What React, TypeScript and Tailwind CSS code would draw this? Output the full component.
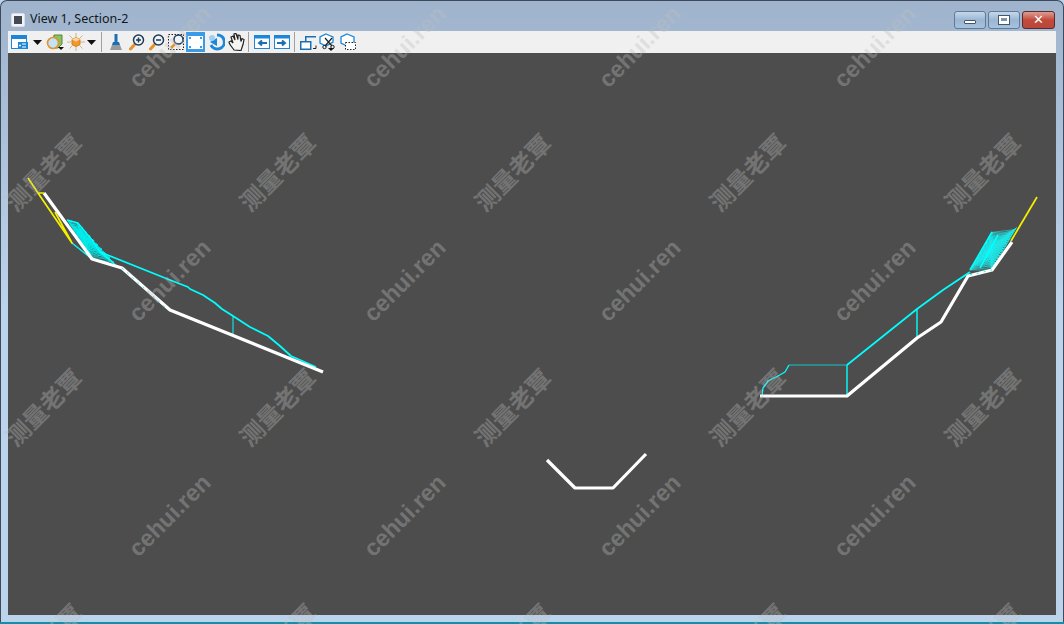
import type { ReactNode } from "react";

const latinMarks = [47, 281, 516].flatMap((y) =>
  [170, 405, 640, 875].map((x) => ({ x, y })),
);
const cjkMarks = [172, 407, 642].flatMap((y) =>
  [43, 277, 512, 747, 982].map((x) => ({ x, y })),
);

// hatch of the cut/fill areas, lines between two edges
function hatch(
  a: [number, number],
  b: [number, number],
  c: [number, number],
  d: [number, number],
  n: number,
) {
  const out: string[] = [];
  for (let i = 0; i <= n; i++) {
    const t = i / n;
    const u = ((i * 7) % n) / n;
    const x1 = a[0] + (b[0] - a[0]) * t;
    const y1 = a[1] + (b[1] - a[1]) * t;
    const x2 = c[0] + (d[0] - c[0]) * u;
    const y2 = c[1] + (d[1] - c[1]) * u;
    out.push(`M${x1.toFixed(1)} ${y1.toFixed(1)}L${x2.toFixed(1)} ${y2.toFixed(1)}`);
  }
  return out.join("");
}

function Ico({ children, w = 18 }: { children: ReactNode; w?: number }) {
  return (
    <svg width={w} height={18} viewBox={`0 0 ${w} 18`} className="block shrink-0">
      {children}
    </svg>
  );
}

function Caret() {
  return (
    <svg width={9} height={5} viewBox="0 0 9 5" className="block shrink-0">
      <path d="M0 0h9L4.500 5z" fill="#111" />
    </svg>
  );
}

function Magnifier({ sign }: { sign?: "+" | "-" }) {
  return (
    <Ico>
      <path d="M7 11 2.500 16" stroke="#e8912a" strokeWidth="3" strokeLinecap="round" />
      <circle cx="10.500" cy="7" r="5" fill="#eef6fb" stroke="#1f3a55" strokeWidth="1.500" />
      {sign && <path d="M8 7h5" stroke="#1f3a55" strokeWidth="1.500" />}
      {sign === "+" && <path d="M10.500 4.500v5" stroke="#1f3a55" strokeWidth="1.500" />}
    </Ico>
  );
}

function Sep() {
  return <div className="h-5 w-px shrink-0 bg-[#a0a0a0]" />;
}

function Toolbar() {
  return (
    <div className="flex h-[22px] items-center bg-[#f0f0f0] pl-[3px]">
      <div className="w-[22px]">
        <Ico>
          <rect x="0.500" y="2.500" width="15" height="13" fill="#fff" stroke="#1b87d8" />
          <rect x="0.500" y="2.500" width="15" height="3.500" fill="#1b87d8" />
          <rect x="7" y="9" width="10" height="7" fill="#1b87d8" />
          <path d="M11 11h4M11 14h4" stroke="#fff" />
          <circle cx="9" cy="12.500" r="1" fill="#fff" />
        </Ico>
      </div>
      <div className="mr-[4px]">
        <Caret />
      </div>
      <div className="relative w-[21px]">
        <Ico>
          <path d="M8 2h8v9l-4 4H6z" fill="#8cc063" stroke="#4f8a34" />
          <circle cx="7" cy="10" r="5.500" fill="#bfe3f7" stroke="#e8912a" strokeWidth="1.600" />
        </Ico>
        <div className="absolute top-[14px] left-[12px] h-0 w-0 border-x-[3px] border-t-[3px] border-x-transparent border-t-[#111]" />
      </div>
      <div className="w-[20px]">
        <Ico>
          <path
            d="M9 0v4M9 14v4M0 9h4M14 9h4M2.500 2.500l3 3M12.500 12.500l3 3M15.500 2.500l-3 3M5.500 12.500l-3 3"
            stroke="#c9b48c"
          />
          <path d="M9 4.500l4 2v5l-4 2-4-2v-5z" fill="#f09a2e" stroke="#d87a15" />
          <path d="M9 4.500l4 2-4 2-4-2z" fill="#fbd9a0" />
        </Ico>
      </div>
      <div className="mr-[5px]">
        <Caret />
      </div>
      <Sep />
      <div className="ml-[7px] w-[19px]">
        <Ico w={14}>
          <rect x="5.500" y="1" width="3" height="8" fill="#1b6fb5" />
          <path d="M4 9h6l1 3H3z" fill="#1b6fb5" />
          <path d="M3 12h8l2 5H1z" fill="#9a9a9a" />
        </Ico>
      </div>
      <div className="w-[20px]">
        <Magnifier sign="+" />
      </div>
      <div className="w-[20px]">
        <Magnifier sign="-" />
      </div>
      <div className="w-[18px]">
        <Ico w={17}>
          <rect x="0.500" y="1.500" width="15" height="15" fill="none" stroke="#222" strokeDasharray="1.500 1.500" />
          <path d="M7 11 3 15" stroke="#e8912a" strokeWidth="2.500" />
          <circle cx="10.500" cy="6.500" r="4.500" fill="#eef6fb" stroke="#1f3a55" strokeWidth="1.500" />
        </Ico>
      </div>
      <div className="flex h-[20px] w-[19px] items-center justify-center bg-[#3a9be6]">
        <svg width={15} height={13} viewBox="0 0 15 13" className="block">
          <rect width="15" height="13" fill="#fff" />
          <path d="M1 1h2v2H1zM12 1h2v2h-2zM1 10h2v2H1zM12 10h2v2h-2z" fill="#3a9be6" />
        </svg>
      </div>
      <div className="ml-[3px] w-[20px]">
        <Ico w={17}>
          <path d="M9 2a7 7 0 1 1-6 10" fill="none" stroke="#1b87d8" strokeWidth="3" />
          <path d="M9 5 2 9l7 4z" fill="#1b87d8" />
          <circle cx="4" cy="5" r="3" fill="#9dd0f2" />
        </Ico>
      </div>
      <div className="w-[20px]">
        <Ico w={17}>
          <path
            d="M6 17C4 14 1 11 1 9l2-1 2 2-2-6 2-1 2 4-1-6 2-.5 2 6V2l2 .5 1 6 1-3 2 1-1 5-2 6z"
            fill="#f4f4f4"
            stroke="#222"
            strokeWidth="1.200"
          />
        </Ico>
      </div>
      <Sep />
      <div className="ml-[5px] w-[20px]">
        <Ico w={17}>
          <rect x="0.500" y="2.500" width="15" height="13" fill="#fff" stroke="#1b87d8" />
          <rect x="0.500" y="2.500" width="15" height="3" fill="#1b87d8" />
          <path d="M13 10H5M8 7.500 5 10l3 2.500" fill="none" stroke="#1b6fb5" strokeWidth="2" />
        </Ico>
      </div>
      <div className="w-[20px]">
        <Ico w={17}>
          <rect x="0.500" y="2.500" width="15" height="13" fill="#fff" stroke="#1b87d8" />
          <rect x="0.500" y="2.500" width="15" height="3" fill="#1b87d8" />
          <path d="M3 10h8M8 7.500l3 2.500-3 2.500" fill="none" stroke="#1b6fb5" strokeWidth="2" />
        </Ico>
      </div>
      <Sep />
      <div className="ml-[5px] w-[19px]">
        <Ico>
          <rect x="0.750" y="8.750" width="10" height="7.500" fill="#fff" stroke="#1b6fb5" strokeWidth="1.500" />
          <path d="M5.750 8V3.750H16" fill="none" stroke="#1b6fb5" strokeWidth="1.500" />
          <path d="M13 15.500h3v-3" fill="none" stroke="#222" />
        </Ico>
      </div>
      <div className="relative w-[21px]">
        <Ico>
          <path d="M7 1l7 3v5l-7 4-6-3V4z" fill="#fff" stroke="#1b87d8" strokeWidth="1.300" />
          <path d="M6 5l7 8M13 5l-7 8" stroke="#222" strokeWidth="1.200" />
          <circle cx="5.500" cy="14" r="1.700" fill="none" stroke="#222" />
          <circle cx="13.500" cy="14" r="1.700" fill="none" stroke="#222" />
        </Ico>
        <div className="absolute top-[15px] left-[9px] h-0 w-0 border-x-[3px] border-t-[3px] border-x-transparent border-t-[#111]" />
      </div>
      <div>
        <Ico>
          <path d="M7 1l7 3v5l-7 4-6-3V4z" fill="#fff" stroke="#1b87d8" strokeWidth="1.300" />
          <rect x="5.500" y="9.500" width="10" height="7" fill="#fff" stroke="#222" strokeDasharray="1.500 1.500" />
        </Ico>
      </div>
    </div>
  );
}

function WinButton({ children, close }: { children: ReactNode; close?: boolean }) {
  return (
    <div
      className={
        close
          ? "flex h-[18px] w-[33px] items-center justify-center rounded-[3px] border border-[#5a2a30] bg-gradient-to-b from-[#dc9d94] via-[#c2493a] to-[#b8483c]"
          : "flex h-[18px] w-[32px] items-center justify-center rounded-[3px] border border-[#5d7a9c] bg-gradient-to-b from-[#c6d8ea] via-[#9ab6d3] to-[#a7c2dc]"
      }
    >
      {children}
    </div>
  );
}

function Drawing() {
  const hatchLeft = hatch([67, 220], [92, 259], [78, 223], [118, 267], 70);
  const hatchRight = hatch([970, 270], [992, 232], [992, 270], [1017, 227], 120);
  return (
    <svg viewBox="8 53 1048 562" className="block h-full w-full">
      <g fill="none" strokeLinejoin="round">
        <path d={hatchLeft} stroke="#00f0f0" strokeWidth="0.700" opacity="0.9" />
        <path d="M67 220 78 223 92 240 100 252 118 267M72 243 92 259" stroke="#00ffff" strokeWidth="1.300" />
        <path
          d="M100 252 170 280 188 287 190 289 203 295 215 303 222 309 233 316 250 327 268 336 280 346 291 356 316 367"
          stroke="#00ffff"
          strokeWidth="1.700"
        />
        <path d="M233 316V336" stroke="#00ffff" />

        <path d={hatchRight} stroke="#20eeee" strokeWidth="0.600" opacity="0.85" />
        <path d="M970 270 992 232M980 268 998 235M970 272 943 290 917 309 847 365" stroke="#00ffff" strokeWidth="1.700" />
        <path d="M847 365V396M917 309V338" stroke="#00ffff" strokeWidth="1.400" />
        <path d="M847 365H789" stroke="#00e8e8" strokeWidth="0.800" />
        <path d="M789 365 785 372 778 376 768 381 763 388 762 396" stroke="#00ffff" strokeWidth="1.300" />

        <path d="M44 193 92 259 122 268 170 310 323 372" stroke="#fff" strokeWidth="3.200" />
        <path d="M760 396H847L917 338 941 322 968 276 992 270 1012 242" stroke="#fff" strokeWidth="3.200" />
        <path d="M547 460 575 488H613L646 454" stroke="#fff" strokeWidth="3.200" />
        <path d="M122 268 167 309M970 275 992 270" stroke="#00e8e8" strokeWidth="0.800" strokeDasharray="2 5" />

        <path d="M28 178 38 193H44M38 193 72 243 55 212" stroke="#f4f000" strokeWidth="1.700" />
        <path d="M1011 241 1037 197" stroke="#f4f000" strokeWidth="1.700" />
      </g>
    </svg>
  );
}

export default function App() {
  return (
    <div className="relative flex h-[624px] w-[1064px] flex-col overflow-hidden bg-[#bcd3ec] font-['Noto_Sans','Liberation_Sans',sans-serif]">
      <div className="flex flex-1 flex-col overflow-hidden rounded-t-[7px] border-x border-t border-[#3c4a5c] bg-gradient-to-b from-[#9fb4cc] via-[#bcd3ec] to-[#bcd3ec] px-[7px] pb-[7px]">
        <div className="flex h-[30px] items-center justify-between pt-[7px] pr-[1px]">
          <div className="flex items-center pl-[3px]">
            <div className="flex h-[14px] w-[14px] items-center justify-center rounded-[2px] border border-[#d8dee6] bg-[#f0f3f7]">
              <div className="h-[8px] w-[8px] bg-[#454a52]" />
            </div>
            <span className="ml-[5px] text-[12.5px] leading-none text-[#101820]">View 1, Section-2</span>
          </div>
          <div className="flex gap-[2px]">
            <WinButton>
              <div className="mt-[5px] h-[4px] w-[12px] rounded-[1px] border border-[#44566b] bg-white" />
            </WinButton>
            <WinButton>
              <div className="flex h-[10px] w-[12px] items-center justify-center border border-[#44566b] bg-white">
                <div className="h-[3px] w-[6px] bg-[#7f94ac]" />
              </div>
            </WinButton>
            <WinButton close>
              <span className="text-[13px] leading-none font-bold text-white [font-family:'DejaVu_Sans',sans-serif]">✕</span>
            </WinButton>
          </div>
        </div>
        <Toolbar />
        <div className="min-h-0 flex-1 bg-[#4d4d4d]">
          <Drawing />
        </div>
      </div>
      <div className="h-[2px] bg-[#0f8fa8]" />

      {latinMarks.map((m) => (
        <span
          key={`${m.x}-${m.y}`}
          className="pointer-events-none absolute -translate-x-1/2 -translate-y-1/2 -rotate-45 text-[23.5px] leading-none font-bold whitespace-nowrap text-[rgba(190,190,190,0.36)] [font-family:'Liberation_Sans',sans-serif]"
          style={{ left: m.x, top: m.y }}
        >
          cehui.ren
        </span>
      ))}
      {cjkMarks.map((m) => (
        <span
          key={`${m.x}-${m.y}`}
          className="pointer-events-none absolute -translate-x-1/2 -translate-y-1/2 -rotate-45 text-[24px] leading-none font-bold whitespace-nowrap text-[rgba(190,190,190,0.36)] [font-family:'Noto_Sans_CJK_SC',sans-serif]"
          style={{ left: m.x, top: m.y }}
        >
          测量老覃
        </span>
      ))}
    </div>
  );
}
